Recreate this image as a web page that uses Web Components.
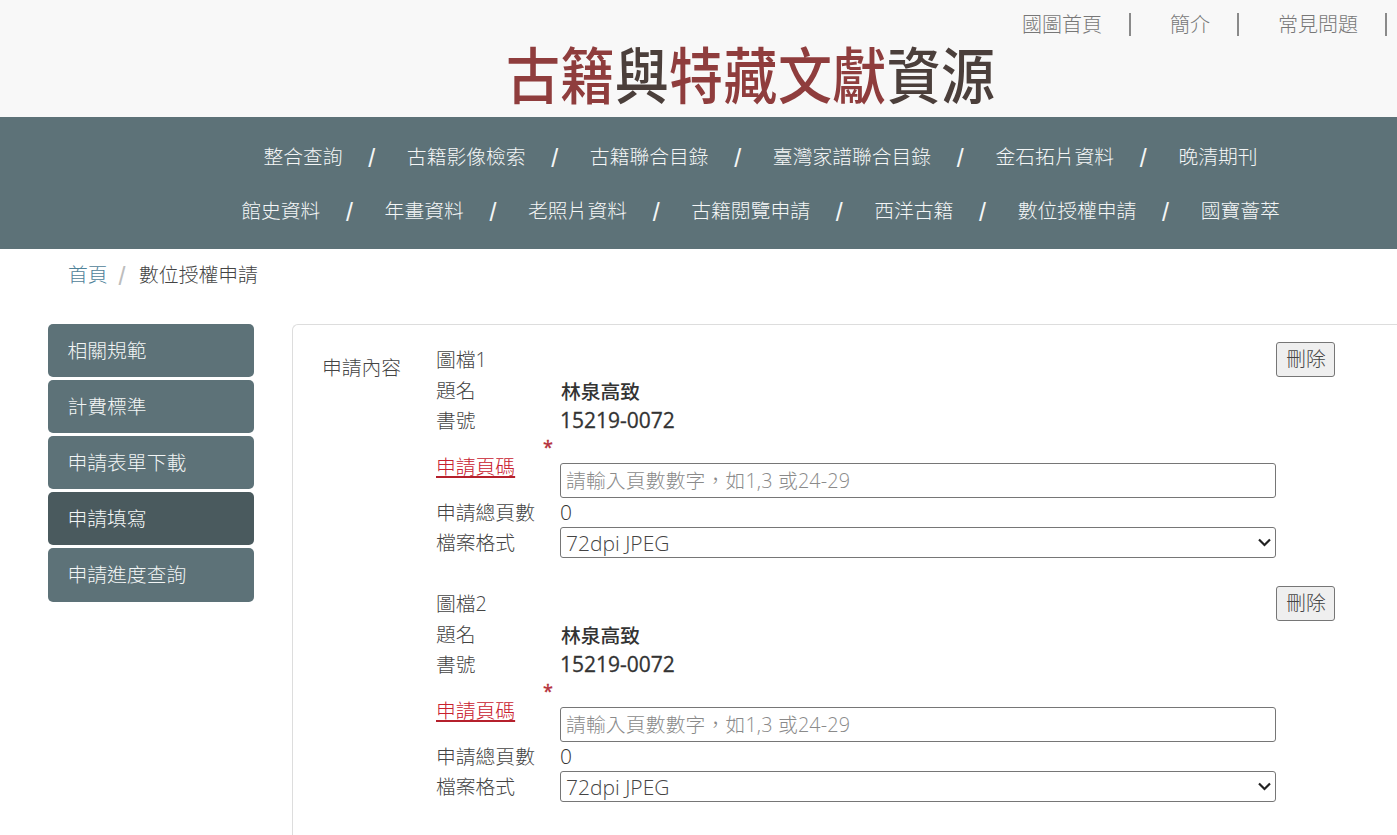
<!DOCTYPE html>
<html lang="zh-Hant"><head><meta charset="utf-8"><title>古籍與特藏文獻資源</title>
<style>
html,body{margin:0;padding:0;height:835px;overflow:hidden;background:#fff}
body{font-family:"Open Sans","Noto Sans CJK TC",sans-serif;font-size:19.8px;color:#333;font-weight:300}
</style></head><body>
<site-header></site-header>
<main-nav></main-nav>
<bread-crumb></bread-crumb>
<page-body>
  <side-menu slot="side">
    <side-item>相關規範</side-item>
    <side-item>計費標準</side-item>
    <side-item>申請表單下載</side-item>
    <side-item active>申請填寫</side-item>
    <side-item>申請進度查詢</side-item>
  </side-menu>
  <content-panel slot="main" label="申請內容">
    <file-block index="1" book-title="林泉高致" book-no="15219-0072"></file-block>
    <file-block index="2" book-title="林泉高致" book-no="15219-0072"></file-block>
  </content-panel>
</page-body>
<script>
function comp(name,html){
  customElements.define(name,class extends HTMLElement{
    connectedCallback(){
      if(this.shadowRoot)return;
      const r=this.attachShadow({mode:'open'});
      r.innerHTML=typeof html==='function'?html(this):html;
    }
  });
}
comp('site-header',`<style>
:host{display:block;height:117px;background:#f8f8f8;box-sizing:border-box}
.top{display:flex;justify-content:flex-end;height:44px;padding:8px 0 0;box-sizing:border-box;color:#777;line-height:33px;font-size:20px}
.top a{color:#777;text-decoration:none}
.top i{font-style:normal;width:2px;height:23px;background:#8a8a8a;margin:5px 39px 0 27px}
.top i:last-child{margin-right:10px}
.logo{display:flex;justify-content:center;font:500 54px/60px "Noto Sans CJK TC",sans-serif;padding-left:104px;height:73px}
.logo b{font-weight:500;color:#8f3d3d;width:54.4px;text-align:center;display:block;transform:scale(1,1.14);transform-origin:50% 50%}
.logo b.d{color:#4b3f3b}
</style>
<div class="top"><a>國圖首頁</a><i></i><a>簡介</a><i></i><a>常見問題</a><i></i></div>
<div class="logo"><b>古</b><b>籍</b><b class="d">與</b><b>特</b><b>藏</b><b>文</b><b>獻</b><b class="d">資</b><b class="d">源</b></div>`);
comp('main-nav',t=>{
  const rows=[['整合查詢','古籍影像檢索','古籍聯合目錄','臺灣家譜聯合目錄','金石拓片資料','晚清期刊'],['館史資料','年畫資料','老照片資料','古籍閱覽申請','西洋古籍','數位授權申請','國寶薈萃']];
  return `<style>
:host{display:block;height:132px;background:#5d7278;box-sizing:border-box;padding:11px 0 0 124px;color:#fff}
.row{display:flex;justify-content:center;align-items:center;height:54px}
a{color:#f4f6f6}
i{font:normal 400 25px/1 "Liberation Sans",sans-serif;width:64.3px;text-align:center;color:#f4f6f6;transform:translate(-3px,3px)}
</style>`+rows.map(r=>`<div class="row">${r.map(x=>`<a>${x}</a>`).join('<i>/</i>')}</div>`).join('');
});
comp('bread-crumb',`<style>
:host{display:flex;align-items:center;height:50px;padding:0 0 2px 68px;box-sizing:border-box}
a{color:#4f8299}
i{font:normal 400 25px/1 "Liberation Sans",sans-serif;color:#bdbdbd;width:33px;margin-right:-1.5px;text-align:center;transform:translate(-2px,3px)}
span{color:#444}
</style><a>首頁</a><i>/</i><span>數位授權申請</span>`);
comp('page-body',`<style>
:host{display:grid;grid-template-columns:206px 1fr;column-gap:38px;padding:25px 0 0 48px}
</style><slot name="side"></slot><slot name="main"></slot>`);
comp('side-menu',`<style>:host{display:flex;flex-direction:column;gap:3px}</style><slot></slot>`);
comp('side-item',t=>`<style>
:host{display:flex;align-items:center;height:53px;padding:0 20px 2px 19.5px;box-sizing:border-box;border-radius:5px;background:${t.hasAttribute('active')?'#4a5a5e':'#5d7278'};color:#f2f5f5}
:host(:last-child){height:54px;padding-bottom:4px}
</style><slot></slot>`);
comp('content-panel',t=>`<style>
:host{display:grid;grid-template-columns:113px 899px;padding:17px 0 0 30px;border:1px solid #ddd;border-width:1px 0 0 1px;border-radius:6px 0 0 0;height:511px;box-sizing:border-box;overflow:hidden}
.l{color:#444;padding-top:11px;line-height:30px;margin-left:-1px}
</style><div class="l">${t.getAttribute('label')}</div><div><slot></slot></div>`);
comp('file-block',t=>`<style>
:host{display:grid;grid-template-columns:124px 716px 59px;margin-bottom:28px;color:#444}
:host(:last-child){margin-bottom:0}
.lb{line-height:29px}
.t{line-height:27px;height:29px}
.h{height:35px;display:flex;align-items:center;padding-bottom:3px;box-sizing:border-box}
button{grid-column:3;grid-row:1;width:59px;height:35px;box-sizing:border-box;border:1px solid #767676;border-radius:3px;background:#efefef;color:#444;font:inherit;padding:0 0 5px 1px}
.v{line-height:29px;grid-column:2/4;color:#333}
.s{padding-left:1px}
.m{font-weight:500}
.n{font-size:21px;font-weight:400;margin-left:-1px;-webkit-text-stroke:.3px #333}
.z{font-size:21px}
.req{grid-column:1/2;height:63px;position:relative;padding-top:17px;box-sizing:border-box;line-height:29px;color:#c8202e}
.req u{text-decoration-thickness:2px;text-underline-offset:2px;text-decoration-color:#b5202c}
.req b{position:absolute;left:107px;top:2px;font:400 18px/20px "Open Sans",sans-serif;-webkit-text-stroke:.4px #b5303a;color:#b5303a}
.cell{display:flex;align-items:flex-end;height:63px}
.sel{grid-column:2/4;position:relative;width:716px;height:31px}
input,select{width:716px;box-sizing:border-box;border:1px solid #767676;border-radius:3px;font:inherit;color:#444;background:#fff;padding:0 5px;margin:0;display:block}
input{height:35px;letter-spacing:.15px}
select{height:31px;appearance:none;-webkit-appearance:none;font-size:21px}
svg{position:absolute;right:5px;top:11px;pointer-events:none}
input::placeholder{color:#8a8a8a}
</style>
<div class="h" style="grid-column:1/3">圖檔${t.getAttribute('index')}</div><button>刪除</button>
<div class="lb t">題名</div><div class="v s m t">${t.getAttribute('book-title')}</div>
<div class="lb">書號</div><div class="v s"><span class="n">${t.getAttribute('book-no')}</span></div>
<div class="req"><u>申請頁碼</u><b>*</b></div><div class="cell"><input placeholder="請輸入頁數數字，如1,3 或24-29"></div><div></div>
<div class="lb">申請總頁數</div><div class="v z">0</div>
<div class="lb" style="line-height:31px">檔案格式</div><div class="sel"><select><option>72dpi JPEG</option></select><svg width="13" height="9" viewBox="0 0 13 9"><path d="M1 1.5 6.5 7 12 1.5" fill="none" stroke="#222" stroke-width="2.2"/></svg></div>`);
</script>
</body></html>
